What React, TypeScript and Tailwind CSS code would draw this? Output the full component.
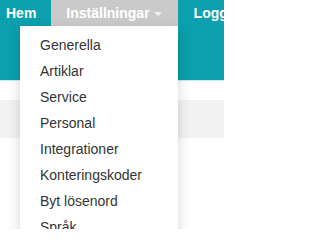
import * as React from 'react';

const items = [
    'Generella',
    'Artiklar',
    'Service',
    'Personal',
    'Integrationer',
    'Konteringskoder',
    'Byt lösenord',
    'Språk',
];

export default function App() {
    return (
        <div className="relative w-[224px] h-[229px] overflow-hidden bg-white font-['Liberation_Sans',Arial,sans-serif]">
            <header className="h-[80px] bg-[#0c9fad]">
                <nav className="flex items-start text-[14px] leading-[20px] font-bold text-white">
                    <a className="pl-[6px] pr-[15px] py-[3px] whitespace-nowrap">Hem</a>
                    <a className="flex items-center pl-[15px] pr-[16px] py-[3px] bg-[#c9c9c9] whitespace-nowrap">
                        Inställningar
                        <span className="ml-[4px] mt-[1px] border-x-[4px] border-t-[4px] border-x-transparent border-t-[#f2f2f2]" />
                    </a>
                    <a className="px-[16px] py-[3px] whitespace-nowrap">Logga ut</a>
                </nav>
            </header>
            <div className="h-[20px] border-t border-[#c6eef2]" />
            <div className="h-[38px] bg-[#f2f2f2]" />

            <ul className="absolute left-[20px] top-[26px] w-[158px] pt-[6px] pb-[5px] bg-white shadow-[0_6px_12px_rgba(0,0,0,0.175)] text-[14px] leading-[20px] text-[#333]">
                {items.map((item) => (
                    <li key={item} className="px-5 py-[3px] whitespace-nowrap">
                        {item}
                    </li>
                ))}
            </ul>
        </div>
    );
}
